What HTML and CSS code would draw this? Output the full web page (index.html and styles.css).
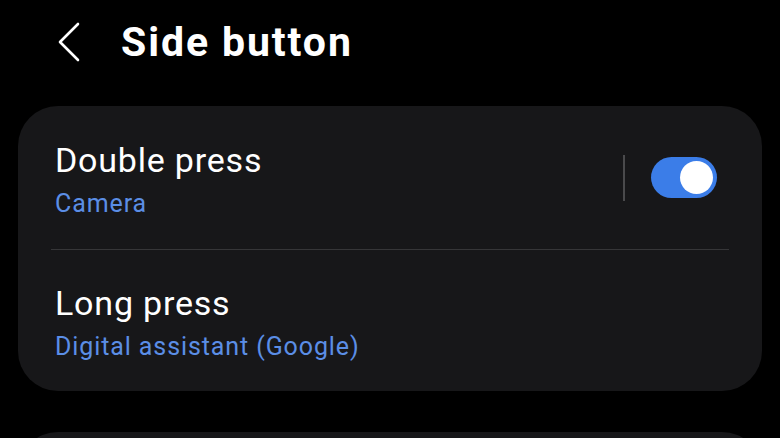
FILE: index.html
```html
<!DOCTYPE html>
<html lang="en">
<head>
    <meta charset="UTF-8">
    <meta name="viewport" content="width=device-width, initial-scale=1.0">
    <title>Side button</title>
    <link rel="stylesheet" href="styles.css">
</head>
<body>
    <div class="screen">
        <header class="topbar">
            <svg class="back" width="24" height="40" viewBox="0 0 24 40" aria-hidden="true">
                <path d="M21 2 L3 20 L21 38" fill="none" stroke="#fff" stroke-width="2.6" stroke-linecap="round" stroke-linejoin="round"/>
            </svg>
            <h1>Side button</h1>
        </header>

        <div class="card">
            <div class="row">
                <div class="row-text">
                    <div class="title">Double press</div>
                    <div class="sub">Camera</div>
                </div>
                <div class="sep"></div>
                <div class="toggle on"><span class="knob"></span></div>
            </div>
            <div class="divider"></div>
            <div class="row">
                <div class="row-text">
                    <div class="title">Long press</div>
                    <div class="sub">Digital assistant (Google)</div>
                </div>
            </div>
        </div>

        <div class="card next"></div>
    </div>
</body>
</html>
```

FILE: styles.css
```css
/* Side button settings */
* {
    box-sizing: border-box;
}

body {
    margin: 0;
    background: #000;
    color: #fff;
    font-family: Roboto, "Noto Sans", sans-serif;
    overflow: hidden;
}

.screen {
    width: 780px;
    height: 438px;
    padding: 0 18px;
    overflow: hidden;
}

.topbar {
    display: flex;
    align-items: center;
    height: 84px;
    padding-left: 39px;
}

.back {
    margin-right: 40px;
}

h1 {
    margin: 0;
    font-size: 41px;
    font-weight: 700;
    letter-spacing: 1.9px;
}

.card {
    margin-top: 22px;
    background: #171719;
    border-radius: 40px;
    padding: 0 45px 0 37px;
}

.row {
    display: flex;
    align-items: center;
    height: 143px;
}

.row:last-child {
    height: 141px;
}

.row-text {
    flex: 1;
    padding-top: 4px;
}

.title {
    font-size: 34px;
    line-height: 40px;
    letter-spacing: 0.8px;
}

.sub {
    color: #5b8ee6;
    font-size: 25px;
    line-height: 32px;
    letter-spacing: 0.9px;
    margin-top: 8px;
}

.sep {
    width: 2px;
    height: 46px;
    background: #4a4a4c;
    margin-right: 26px;
}

.toggle {
    width: 66px;
    height: 41px;
    border-radius: 21px;
    background: #3b7de8;
    position: relative;
}

.knob {
    position: absolute;
    top: 4px;
    right: 4px;
    width: 33px;
    height: 33px;
    border-radius: 50%;
    background: #fff;
}

.divider {
    height: 1px;
    background: #363638;
    margin-left: -4px;
    margin-right: -12px;
}

.card.next {
    margin-top: 41px;
    height: 80px;
}
```
